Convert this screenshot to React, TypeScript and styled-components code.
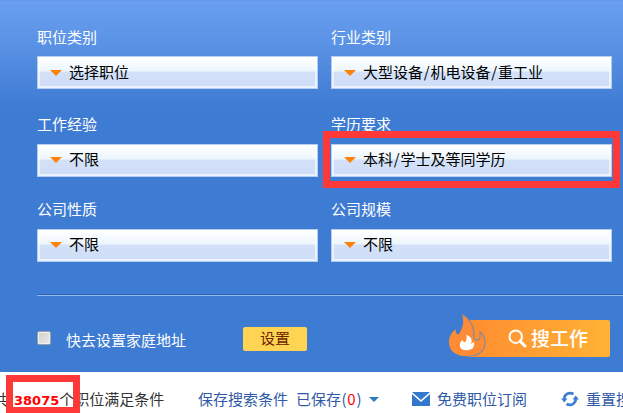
import React from 'react';
import styled, { createGlobalStyle } from 'styled-components';

const GlobalStyle = createGlobalStyle`
  * {
    box-sizing: border-box;
  }

  body {
    margin: 0;
    overflow: hidden;
    background: white;
    font-family: 'Noto Sans CJK SC', sans-serif;
    font-size: 15px;
    line-height: 20px;
  }
`;

const Page = styled.div`
  width: 623px;
  height: 413px;
  overflow: hidden;
  white-space: nowrap;
`;

const Panel = styled.section`
  height: 372px;
  padding: 26px 0 0 37px;
  border-top: 1px solid #5f9bee;
  background: linear-gradient(#699fed 0, #5b93e6 40px, #3e7bd3 108px, #3e7bd3);
`;

const Fields = styled.div`
  display: grid;
  grid-template-columns: 281px 281px;
  grid-template-rows: 87px 85px 95px;
  column-gap: 13px;
`;

const Label = styled.div`
  height: 30px;
  color: white;
`;

const Select = styled.button`
  display: flex;
  align-items: center;
  width: 281px;
  height: 33px;
  padding: 0 0 2px 12px;
  border: 1px solid #b3cdf3;
  background: linear-gradient(#fff 0, #edf6fd 14px, #d2e1f8 15px, #cfdef7 100%);
  box-shadow: inset 0 0 0 2px rgba(255, 255, 255, 0.6);
  color: black;
  font: inherit;
`;

// the first row sits one pixel tighter than the others
const Field = styled.div<{ $first?: boolean }>`
  position: relative;

  ${Label} {
    height: ${({ $first }) => ($first ? 29 : 30)}px;
  }

  ${Select} {
    padding-bottom: ${({ $first }) => ($first ? 1 : 3)}px;
  }
`;

const Caret = styled.span<{ color: string; size?: number }>`
  flex: none;
  margin-top: ${({ size = 6 }) => (size < 6 ? 0 : 2)}px;
  border: ${({ size = 6 }) => size}px solid transparent;
  border-top-color: ${({ color }) => color};
  border-bottom: 0;
`;

const SelectText = styled.span`
  margin-left: 7px;
`;

const Slash = styled.span`
  display: inline-block;
  width: 7.5px;
  text-align: center;
`;

const Marker = styled.div`
  position: absolute;
  border: 7px solid #ff3838;
  pointer-events: none;
`;

const FieldMarker = styled(Marker)`
  top: 17px;
  left: -8px;
  width: 297px;
  height: 57px;
`;

const CountMarker = styled(Marker)`
  top: 3px;
  left: 6px;
  width: 74px;
  height: 38px;
  border-bottom-width: 6px;
`;

const Divider = styled.div`
  height: 2px;
  border-top: 1px solid #2f62b2;
  border-bottom: 1px solid #91b7ee;
`;

const Actions = styled.div`
  display: flex;
  align-items: flex-start;
  padding-top: 18px;
`;

const Checkbox = styled.input`
  appearance: none;
  width: 14px;
  height: 14px;
  margin: 17px 15px 0 0;
  border: 1px solid #9a9fa8;
  border-radius: 2px;
  background: linear-gradient(135deg, #cfcfcf, #eaeaea);
  box-shadow: inset 0 0 0 1px #f1f1f1;
`;

const HomeText = styled.label`
  width: 177px;
  margin-top: 16px;
  color: white;
`;

const SetButton = styled.button`
  width: 64px;
  height: 24px;
  margin-top: 13px;
  padding: 0 0 2px;
  border: 0;
  border-radius: 2px;
  background: #ffd452;
  color: #6b2500;
  font: inherit;
`;

const SearchButton = styled.button`
  display: flex;
  width: 161px;
  height: 44px;
  margin-left: 142px;
  padding: 0;
  border: 0;
  background: none;
`;

const SearchBody = styled.span`
  display: flex;
  align-items: center;
  width: 142px;
  height: 37px;
  margin: 6px 0 0 -19px;
  padding: 0 0 1px 40px;
  gap: 4px;
  border-radius: 2px;
  background: linear-gradient(90deg, #ff8d30, #ffb235);
  color: white;
  font: 500 19px/24px 'Noto Sans CJK SC', sans-serif;
`;

const Flame = styled.svg`
  position: relative;
  z-index: 1;
  flex: none;
`;

const Results = styled.div`
  position: relative;
  display: flex;
  align-items: center;
  height: 41px;
  padding-top: 13px;
  color: #333;
`;

const Total = styled.div`
  flex: none;
  width: 205px;
  margin-left: -7px;
  padding-top: 1px;
`;

const Count = styled.b`
  margin-left: 6px;
  color: #f00;
  font: bold 13px/20px 'DejaVu Sans', sans-serif;
`;

const ToolLink = styled.a<{ width?: number }>`
  display: flex;
  flex: none;
  align-items: center;
  width: ${({ width }) => (width ? `${width}px` : 'auto')};
  gap: 7px;
  color: #2e59a7;
`;

const SavedCount = styled.span`
  display: inline-flex;
  justify-content: space-around;
  width: 21px;
`;

const Red = styled.span`
  color: #f00;
`;

const fields = [
  { label: '职位类别', value: '选择职位' },
  { label: '行业类别', value: '大型设备/机电设备/重工业' },
  { label: '工作经验', value: '不限' },
  { label: '学历要求', value: '本科/学士及等同学历', marked: true },
  { label: '公司性质', value: '不限' },
  { label: '公司规模', value: '不限' },
];

const FlameIcon = () => (
  <Flame width="38" height="44" viewBox="0 0 38 44">
    <path
      d="M13 0C20 4 25 11 25.5 19C25.5 22 25 25 28 25C31 25 31 21 31 18C36 21 38 28 35 34C32 40 27 42 21 42C8 43 0 38 0 28C0 22 3 18 7 15C6 19 8 21 10 20C13 15 16 9 13 0Z"
      fill="#ff8b34"
    />
    <path
      d="M13 .5C20 4 24.5 11 24.8 18C24.6 22 24 26 28 26C32 26 31 21 31 18C36 21 37 28 35 34C32 40 27 42 21 42"
      fill="none"
      stroke="#8f8a92"
      strokeWidth="1.3"
    />
    <path
      d="M17 21C22 22 24 26 22 30L25 28C26 33 23 36 19 36C14 37 10 34 11 30C11 28 12 27 14 26C14 28 15 29 16 28C18 26 18 24 17 21Z"
      fill="white"
    />
  </Flame>
);

const SearchIcon = () => (
  <svg width="19" height="19" viewBox="0 0 19 19" fill="none" stroke="white">
    <circle cx="7.7" cy="7.7" r="6.2" strokeWidth="2" />
    <path d="M12.2 12.2L17 17" strokeWidth="3" strokeLinecap="round" />
  </svg>
);

const MailIcon = () => (
  <svg width="18" height="14" viewBox="0 0 18 14">
    <path d="M0 0H18L9 8Z" fill="#3478cc" />
    <path d="M0 2L9 10L18 2V14H0Z" fill="#3478cc" />
  </svg>
);

const RefreshIcon = () => (
  <svg width="18" height="16" viewBox="0 0 18 16">
    <g fill="none" stroke="#3c7fd2" strokeWidth="2.6">
      <path d="M3.2 8.5C3 3.5 8 .6 12.5 3" />
      <path d="M14.8 7.5C15 12.5 10 15.4 5.5 13" />
    </g>
    <path d="M0 7.5H6.5L3.3 11.5ZM11.5 8.5H18L14.7 4.5Z" fill="#3c7fd2" />
  </svg>
);

const App: React.FC = () => (
  <Page>
    <GlobalStyle />
    <Panel>
      <Fields>
        {fields.map(({ label, value, marked }, index) => (
          <Field key={label} $first={index < 2}>
            <Label>{label}</Label>
            <Select>
              <Caret color="#ff8208" />
              <SelectText>
                {value.split('/').map((part, i) => (
                  <React.Fragment key={part}>
                    {i > 0 && <Slash>/</Slash>}
                    {part}
                  </React.Fragment>
                ))}
              </SelectText>
            </Select>
            {marked && <FieldMarker />}
          </Field>
        ))}
      </Fields>
      <Divider />
      <Actions>
        <Checkbox type="checkbox" id="home" />
        <HomeText htmlFor="home">快去设置家庭地址</HomeText>
        <SetButton>设置</SetButton>
        <SearchButton>
          <FlameIcon />
          <SearchBody>
            <SearchIcon />
            搜工作
          </SearchBody>
        </SearchButton>
      </Actions>
    </Panel>
    <Results>
      <Total>
        共<Count>38075</Count>个职位满足条件
      </Total>
      <ToolLink width={98}>保存搜索条件</ToolLink>
      <ToolLink width={116}>
        <span>
          已保存
          <SavedCount>
            (<Red>0</Red>)
          </SavedCount>
        </span>
        <Caret color="#2f7cc4" size={5} />
      </ToolLink>
      <ToolLink width={149}>
        <MailIcon />
        免费职位订阅
      </ToolLink>
      <ToolLink>
        <RefreshIcon />
        重置搜索
      </ToolLink>
      <CountMarker />
    </Results>
  </Page>
);

export default App;
